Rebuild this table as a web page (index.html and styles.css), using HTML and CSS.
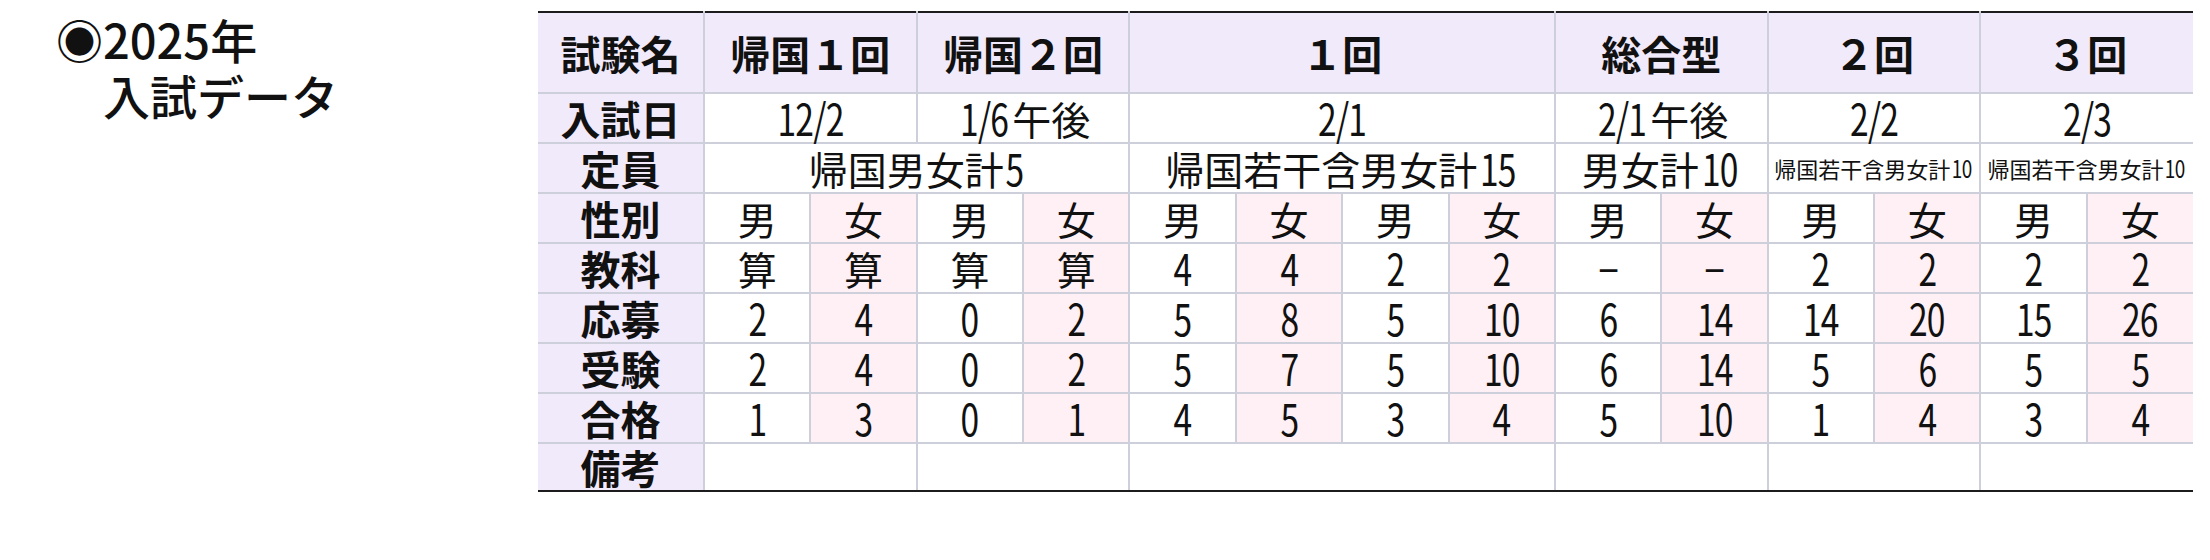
FILE: index.html
```html
<!DOCTYPE html>
<html lang="ja">
<head>
<meta charset="utf-8">
<title>2025年 入試データ</title>
<link rel="stylesheet" href="styles.css">
</head>
<body>
<div class="page">
  <h2 class="title">◉2025年<br>　入試データ</h2>
  <table class="exam">
    <colgroup>
      <col class="c-label">
      <col span="14" class="c-data">
    </colgroup>
    <tr class="r-head">
      <th class="lbl">試験名</th>
      <th colspan="2">帰国１回</th>
      <th colspan="2">帰国２回</th>
      <th colspan="4">１回</th>
      <th colspan="2">総合型</th>
      <th colspan="2">２回</th>
      <th colspan="2">３回</th>
    </tr>
    <tr>
      <th class="lbl">入試日</th>
      <td colspan="2"><span class="n">12/2</span></td>
      <td colspan="2"><span class="n">1/6</span>午後</td>
      <td colspan="4"><span class="n">2/1</span></td>
      <td colspan="2"><span class="n">2/1</span>午後</td>
      <td colspan="2"><span class="n">2/2</span></td>
      <td colspan="2"><span class="n">2/3</span></td>
    </tr>
    <tr>
      <th class="lbl">定員</th>
      <td colspan="4">帰国男女計<span class="n">5</span></td>
      <td colspan="4">帰国若干含男女計<span class="n">15</span></td>
      <td colspan="2">男女計<span class="n">10</span></td>
      <td colspan="2" class="small">帰国若干含男女計<span class="n">10</span></td>
      <td colspan="2" class="small">帰国若干含男女計<span class="n">10</span></td>
    </tr>
    <tr>
      <th class="lbl">性別</th>
      <td>男</td><td class="f">女</td><td>男</td><td class="f">女</td>
      <td>男</td><td class="f">女</td><td>男</td><td class="f">女</td>
      <td>男</td><td class="f">女</td><td>男</td><td class="f">女</td>
      <td>男</td><td class="f">女</td>
    </tr>
    <tr>
      <th class="lbl">教科</th>
      <td>算</td><td class="f">算</td><td>算</td><td class="f">算</td>
      <td><span class="n">4</span></td><td class="f"><span class="n">4</span></td><td><span class="n">2</span></td><td class="f"><span class="n">2</span></td>
      <td><span class="dash">－</span></td><td class="f"><span class="dash">－</span></td><td><span class="n">2</span></td><td class="f"><span class="n">2</span></td>
      <td><span class="n">2</span></td><td class="f"><span class="n">2</span></td>
    </tr>
    <tr>
      <th class="lbl">応募</th>
      <td><span class="n">2</span></td><td class="f"><span class="n">4</span></td><td><span class="n">0</span></td><td class="f"><span class="n">2</span></td>
      <td><span class="n">5</span></td><td class="f"><span class="n">8</span></td><td><span class="n">5</span></td><td class="f"><span class="n">10</span></td>
      <td><span class="n">6</span></td><td class="f"><span class="n">14</span></td><td><span class="n">14</span></td><td class="f"><span class="n">20</span></td>
      <td><span class="n">15</span></td><td class="f"><span class="n">26</span></td>
    </tr>
    <tr>
      <th class="lbl">受験</th>
      <td><span class="n">2</span></td><td class="f"><span class="n">4</span></td><td><span class="n">0</span></td><td class="f"><span class="n">2</span></td>
      <td><span class="n">5</span></td><td class="f"><span class="n">7</span></td><td><span class="n">5</span></td><td class="f"><span class="n">10</span></td>
      <td><span class="n">6</span></td><td class="f"><span class="n">14</span></td><td><span class="n">5</span></td><td class="f"><span class="n">6</span></td>
      <td><span class="n">5</span></td><td class="f"><span class="n">5</span></td>
    </tr>
    <tr>
      <th class="lbl">合格</th>
      <td><span class="n">1</span></td><td class="f"><span class="n">3</span></td><td><span class="n">0</span></td><td class="f"><span class="n">1</span></td>
      <td><span class="n">4</span></td><td class="f"><span class="n">5</span></td><td><span class="n">3</span></td><td class="f"><span class="n">4</span></td>
      <td><span class="n">5</span></td><td class="f"><span class="n">10</span></td><td><span class="n">1</span></td><td class="f"><span class="n">4</span></td>
      <td><span class="n">3</span></td><td class="f"><span class="n">4</span></td>
    </tr>
    <tr class="r-note">
      <th class="lbl">備考</th>
      <td colspan="2"></td>
      <td colspan="2"></td>
      <td colspan="4"></td>
      <td colspan="2"></td>
      <td colspan="2"></td>
      <td colspan="2"></td>
    </tr>
  </table>
</div>
</body>
</html>
```
FILE: styles.css
```css
html, body {
  margin: 0;
  padding: 0;
  background: #ffffff;
}

.page {
  display: flex;
  align-items: flex-start;
  padding: 11px 0 0 56px;
}

.title {
  width: 482px;
  flex: none;
  margin: 0;
  font-family: "Noto Sans CJK JP", sans-serif;
  font-weight: 500;
  font-size: 47px;
  line-height: 56px;
  color: #111;
}

.exam {
  flex: none;
  width: 1655px;
  table-layout: fixed;
  border-collapse: collapse;
  font-family: "Noto Sans CJK JP", sans-serif;
  color: #111;
  border-top: 2px solid #1c1c1c;
  border-bottom: 2px solid #1c1c1c;
}

.c-label { width: 166px; }
.c-data { width: 106.36px; }

.exam tr { height: 50px; }
.exam tr.r-head { height: 81px; }
.exam tr.r-note { height: 48px; }

.exam th,
.exam td {
  padding: 0;
  text-align: center;
  vertical-align: middle;
  border: 2px solid #cdd0da;
  white-space: nowrap;
  line-height: 1;
}

.exam tr:first-child th,
.exam tr:first-child td { border-top: 2px solid #1c1c1c; }
.exam tr:last-child th,
.exam tr:last-child td { border-bottom: 2px solid #1c1c1c; }
.exam th:first-child { border-left: none; }
.exam tr > :last-child { border-right: none; }

.exam th {
  background: #f1eafb;
  font-weight: 700;
  font-size: 40px;
}

.exam td {
  background: #ffffff;
  font-size: 39px;
  font-weight: 400;
}

.exam td.f { background: #fff0f6; }

.exam td.small {
  font-size: 22px;
}

.n {
  display: inline-block;
  transform: scale(0.86, 1.13);
  transform-origin: 50% 80%;
  letter-spacing: -0.02em;
}

.dash {
  display: inline-block;
  transform: scaleX(0.62);
}
```
